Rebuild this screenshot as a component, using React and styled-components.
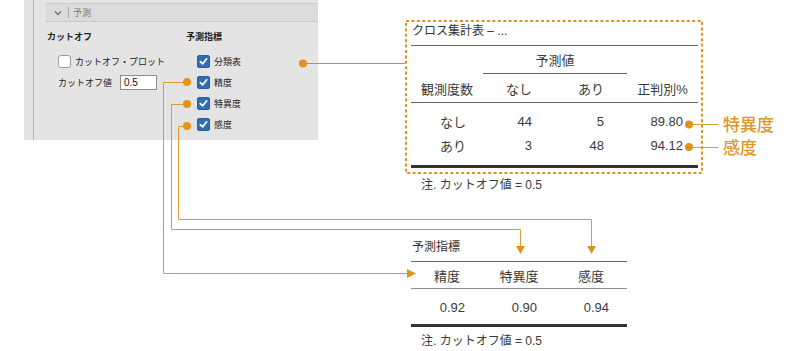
import React from "react";
import styled, { createGlobalStyle } from "styled-components";

const GlobalStyle = createGlobalStyle`
  html, body { margin: 0; padding: 0; background: #ffffff; }
  body {
    font-family: "Liberation Sans", "Noto Sans CJK JP", sans-serif;
    color: #3a3a3a;
  }
`;

const ORANGE = "#e0921b";
const LEAD = "#e09a34";

const Canvas = styled.div`
  position: relative;
  width: 800px;
  height: 351px;
  overflow: hidden;
  background: #ffffff;
`;

/* ---------- options panel ---------- */

const Panel = styled.div`
  position: absolute;
  left: 24px;
  top: 0;
  width: 294px;
  height: 140px;
  background: #e4e4e4;
  overflow: hidden;
`;

const Rail = styled.div`
  margin-left: 9px;
  height: 100%;
  box-sizing: border-box;
  border-left: 1px solid #b6b6b6;
  padding: 3px 0 0 12px;
`;

const SectionBar = styled.div`
  display: flex;
  align-items: center;
  height: 19px;
  box-sizing: border-box;
  border-top: 1px solid #cbcbcb;
  border-bottom: 1px solid #cbcbcb;
  background: #dbdbdb;
  padding-left: 8px;
  font-size: 9px;
  color: #7a7a7a;
`;

const BarDivider = styled.span`
  width: 1px;
  height: 11px;
  background: #a8a8a8;
  margin: 0 4px 0 6px;
`;

const Columns = styled.div`
  display: grid;
  grid-template-columns: 139px 1fr;
  margin-top: 8px;
  padding-left: 1px;
`;

const GroupTitle = styled.div`
  font-size: 9px;
  line-height: 14px;
  font-weight: 700;
  color: #1e1e1e;
`;

const OptionList = styled.div`
  display: flex;
  flex-direction: column;
  margin-top: 7px;
`;

const Option = styled.div`
  display: flex;
  align-items: center;
  gap: 4px;
  height: 21px;
  padding-left: 11px;
  font-size: 9px;
  color: #222;
`;

const Box = styled.span`
  display: inline-flex;
  align-items: center;
  justify-content: center;
  width: 13px;
  height: 13px;
  box-sizing: border-box;
  border-radius: ${(p) => (p.$checked ? "2px" : "3px")};
  border: 1px solid ${(p) => (p.$checked ? "#2a5f9f" : "#9c9c9c")};
  background: ${(p) => (p.$checked ? "#2f6db5" : "#ffffff")};
`;

const ValueInput = styled.span`
  display: flex;
  align-items: center;
  width: 37px;
  height: 15px;
  box-sizing: border-box;
  margin-left: 4px;
  padding-left: 3px;
  border: 1px solid #8e8e8e;
  background: #ffffff;
  font-size: 10px;
  color: #111;
`;

function CheckBox({ checked }) {
  return (
    <Box $checked={checked}>
      {checked && (
        <svg width="9" height="9" viewBox="0 0 9 9">
          <path d="M1.3 4.6 L3.6 6.9 L7.7 1.8" fill="none" stroke="#fff" strokeWidth="1.7" strokeLinecap="round" strokeLinejoin="round" />
        </svg>
      )}
    </Box>
  );
}

function OptionsPanel() {
  return (
    <Panel>
      <Rail>
        <SectionBar>
          <svg width="8" height="6" viewBox="0 0 8 6">
            <path d="M1 1.5 L4 4.5 L7 1.5" fill="none" stroke="#6e6e6e" strokeWidth="1.3" />
          </svg>
          <BarDivider />
          予測
        </SectionBar>
        <Columns>
          <div>
            <GroupTitle>カットオフ</GroupTitle>
            <OptionList>
              <Option>
                <CheckBox />
                カットオフ・プロット
              </Option>
              <Option>
                カットオフ値
                <ValueInput>0.5</ValueInput>
              </Option>
            </OptionList>
          </div>
          <div>
            <GroupTitle>予測指標</GroupTitle>
            <OptionList>
              {["分類表", "精度", "特異度", "感度"].map((label) => (
                <Option key={label}>
                  <CheckBox checked />
                  {label}
                </Option>
              ))}
            </OptionList>
          </div>
        </Columns>
      </Rail>
    </Panel>
  );
}

/* ---------- output tables ---------- */

const CrossGroup = styled.div`
  position: absolute;
  left: 405px;
  top: 20px;
  display: flex;
  align-items: flex-start;
  gap: 20px;
`;

const DashedFrame = styled.div`
  position: relative;
  width: 298px;
  height: 154px;
  box-sizing: border-box;
  padding: 2px 5px 0 6px;
`;

const FrameLine = styled.svg`
  position: absolute;
  inset: 0;
  pointer-events: none;
`;

const TableTitle = styled.div`
  font-size: 12px;
  line-height: 18px;
  color: #333;
  padding-left: 1px;
`;

const Grid = styled.div`
  display: grid;
  grid-template-columns: ${(p) => p.$cols};
  font-size: 13px;
  color: #3a3a3a;
`;

const HeadGrid = styled(Grid)`
  margin-top: 5px;
  border-top: 1px solid #6d6762;
`;

const BodyGrid = styled(Grid)`
  padding: ${(p) => p.$pad};
  border-bottom: 3px solid #333;
`;

const Cell = styled.div`
  height: ${(p) => p.$h || 24}px;
  box-sizing: border-box;
  display: flex;
  align-items: center;
  justify-content: ${(p) => (p.$right ? "flex-end" : "center")};
  padding-right: ${(p) => p.$pr || 0}px;
  grid-column: ${(p) => p.$span || "auto"};
  border-bottom: ${(p) => (p.$rule ? `1px solid ${p.$rule}` : "none")};
`;

const Footnote = styled.div`
  margin-top: ${(p) => p.$gap}px;
  padding-left: ${(p) => p.$indent}px;
  font-size: 12px;
  line-height: 16px;
  color: #3a3a3a;
`;

const Annotations = styled.div`
  display: flex;
  flex-direction: column;
  margin-top: 92px;
  font-size: 17px;
  line-height: 23px;
  font-weight: 500;
  color: #e0952a;
  font-family: "Noto Sans CJK JP", sans-serif;
`;

const CROSS_COLS = "72px 72px 72px 71px";

const crossRows = [
  ["なし", "44", "5", "89.80"],
  ["あり", "3", "48", "94.12"],
];

function CrossTable() {
  return (
    <CrossGroup>
      <div>
        <DashedFrame>
          <FrameLine width="298" height="154">
            <rect x="1" y="1" width="296" height="152" fill="none" stroke={ORANGE} strokeWidth="2" strokeDasharray="3 2.4" />
          </FrameLine>
          <TableTitle>クロス集計表 – ...</TableTitle>
          <HeadGrid $cols={CROSS_COLS}>
            <Cell $h={28} />
            <Cell $h={28} $span="span 2" $rule="#6d6762">予測値</Cell>
            <Cell $h={28} />
            {["観測度数", "なし", "あり", "正判別%"].map((h) => (
              <Cell key={h} $h={29} $rule="#6d6762">{h}</Cell>
            ))}
          </HeadGrid>
          <BodyGrid $cols={CROSS_COLS} $pad="6px 0 8px">
            {crossRows.map(([label, a, b, pct]) => (
              <React.Fragment key={label}>
                <Cell $right $pr={17}>{label}</Cell>
                <Cell $right $pr={23}>{a}</Cell>
                <Cell $right $pr={23}>{b}</Cell>
                <Cell $right $pr={15}>{pct}</Cell>
              </React.Fragment>
            ))}
          </BodyGrid>
        </DashedFrame>
        <Footnote $gap={3} $indent={16}>注. カットオフ値 = 0.5</Footnote>
      </div>
      <Annotations>
        <span>特異度</span>
        <span>感度</span>
      </Annotations>
    </CrossGroup>
  );
}

const MetricsGroup = styled.div`
  position: absolute;
  left: 411px;
  top: 238px;
  width: 216px;
`;

const METRIC_COLS = "72px 72px 72px";

function MetricsTable() {
  return (
    <MetricsGroup>
      <TableTitle>予測指標</TableTitle>
      <HeadGrid $cols={METRIC_COLS}>
        {["精度", "特異度", "感度"].map((h) => (
          <Cell key={h} $h={27} $rule="#8a8a8a">{h}</Cell>
        ))}
      </HeadGrid>
      <BodyGrid $cols={METRIC_COLS} $pad="6px 0 5px">
        {["0.92", "0.90", "0.94"].map((v) => (
          <Cell key={v} $right $pr={18}>{v}</Cell>
        ))}
      </BodyGrid>
      <Footnote $gap={6} $indent={10}>注. カットオフ値 = 0.5</Footnote>
    </MetricsGroup>
  );
}

/* ---------- connectors ---------- */

const Wires = styled.svg`
  position: absolute;
  inset: 0;
  pointer-events: none;
`;

function Connectors() {
  return (
    <Wires width="800" height="351">
      <g fill="none" stroke={LEAD} strokeWidth="1">
        <path d="M303 63.5 H405" stroke="#d98c1c" />
        <path d="M187 82.5 H163.5 V273.5 H408" />
        <path d="M187 104.5 H171.5 V229.5 H520.5 V247" />
        <path d="M187 126.5 H178.5 V219.5 H591.5 V247" />
        <path d="M689 124.5 H718" />
        <path d="M689 147.5 H718" />
      </g>
      <g fill={ORANGE}>
        <circle cx="303" cy="63.5" r="4" />
        <circle cx="187" cy="82" r="4" />
        <circle cx="187" cy="104" r="4" />
        <circle cx="187" cy="126" r="4" />
        <circle cx="689" cy="124.5" r="4" />
        <circle cx="689" cy="147" r="4" />
        <polygon points="407,269 416,273.5 407,278" />
        <polygon points="516,246 525,246 520.5,254" />
        <polygon points="587,246 596,246 591.5,254" />
      </g>
    </Wires>
  );
}

export default function App() {
  return (
    <>
      <GlobalStyle />
      <Canvas>
        <OptionsPanel />
        <CrossTable />
        <MetricsTable />
        <Connectors />
      </Canvas>
    </>
  );
}
